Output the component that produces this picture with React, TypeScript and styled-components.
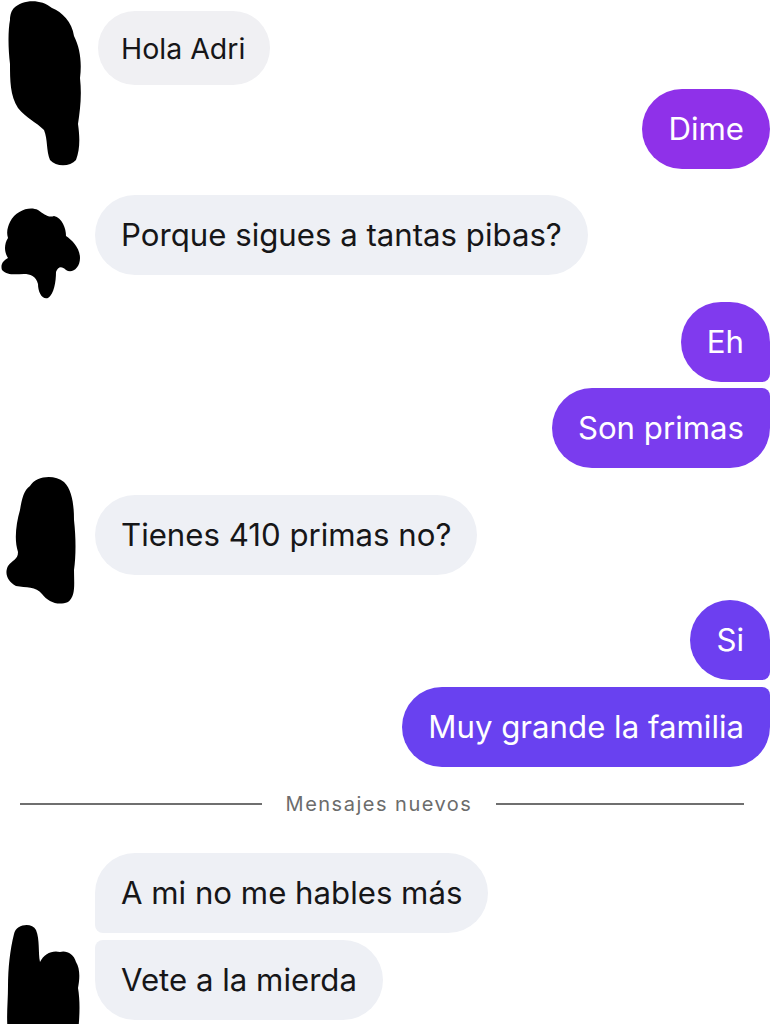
import React from "react";
import styled, { createGlobalStyle, css } from "styled-components";

const Global = createGlobalStyle`
  html, body { margin: 0; padding: 0; background: #ffffff; }
  body { font-family: Inter, "Noto Sans", "Liberation Sans", sans-serif; }
  * { box-sizing: border-box; }
`;

const Page = styled.div`
  position: relative;
  width: 771px;
  height: 1024px;
  overflow: hidden;
  background: #ffffff;
`;

const Thread = styled.div`
  display: flex;
  flex-direction: column;
  padding: 11px 1px 0 0;
`;

type Side = "in" | "out";

const Row = styled.div<{ $side: Side; $mt: number; $small?: boolean }>`
  display: flex;
  justify-content: ${(p) => (p.$side === "out" ? "flex-end" : "flex-start")};
  padding-left: ${(p) => (p.$side === "in" ? (p.$small ? "98px" : "95px") : "0")};
  margin-top: ${(p) => p.$mt}px;
`;

type Corners = { tl?: boolean; tr?: boolean; bl?: boolean; br?: boolean };

const Bubble = styled.div<{ $side: Side; $bg?: string; $small?: boolean; $c: Corners }>`
  display: flex;
  align-items: center;
  height: ${(p) => (p.$small ? 74 : 80)}px;
  padding: ${(p) => (p.$small ? "0 25px 0 23px" : "0 26px 1px")};
  font-size: ${(p) => (p.$small ? 28.5 : 31.2)}px;
  letter-spacing: 0;
  white-space: nowrap;
  border-top-left-radius: ${(p) => (p.$c.tl ? 8 : 40)}px;
  border-top-right-radius: ${(p) => (p.$c.tr ? 8 : 40)}px;
  border-bottom-left-radius: ${(p) => (p.$c.bl ? 8 : 40)}px;
  border-bottom-right-radius: ${(p) => (p.$c.br ? 8 : 40)}px;
  ${(p) =>
    p.$side === "in"
      ? css`
          background: ${p.$small ? "#f0f0f3" : "#eef0f5"};
          color: #161618;
        `
      : css`
          background: ${p.$bg};
          color: #ffffff;
        `}
`;

const Divider = styled.div`
  display: grid;
  grid-template-columns: 242px 1fr 248px;
  align-items: center;
  column-gap: 20px;
  padding: 0 26px 0 20px;
  margin-top: 26px;
  height: 22px;
`;

const Rule = styled.div`
  height: 2px;
  background: #6f6f6f;
`;

const DividerLabel = styled.span`
  font-family: Inter, "Noto Sans", sans-serif;
  font-size: 20px;
  color: #6c6c6c;
  text-align: center;
  letter-spacing: 1.5px;
  line-height: 22px;
`;

const Scribble = styled.svg<{ $x: number; $y: number }>`
  position: absolute;
  left: ${(p) => p.$x}px;
  top: ${(p) => p.$y}px;
  overflow: visible;
`;

type Msg = {
  text: string;
  side: Side;
  mt: number;
  c?: Corners;
  bg?: string;
  small?: boolean;
};

const before: Msg[] = [
  { text: "Hola Adri", side: "in", mt: 0, small: true },
  { text: "Dime", side: "out", mt: 4, bg: "#8f31e9" },
  { text: "Porque sigues a tantas pibas?", side: "in", mt: 26 },
  { text: "Eh", side: "out", mt: 27, bg: "#803aee", c: { br: true } },
  { text: "Son primas", side: "out", mt: 6, bg: "#7a3cee", c: { tr: true } },
  { text: "Tienes 410 primas no?", side: "in", mt: 27 },
  { text: "Si", side: "out", mt: 25, bg: "#6d3ff0", c: { br: true } },
  { text: "Muy grande la familia", side: "out", mt: 7, bg: "#6941f0", c: { tr: true } },
];

const after: Msg[] = [
  { text: "A mi no me hables más", side: "in", mt: 38, c: { bl: true } },
  { text: "Vete a la mierda", side: "in", mt: 7, c: { tl: true } },
];

const renderMsg = (m: Msg, i: number) => (
  <Row key={i} $side={m.side} $mt={m.mt} $small={m.small}>
    <Bubble $side={m.side} $bg={m.bg} $small={m.small} $c={m.c || {}}>
      {m.text}
    </Bubble>
  </Row>
);

export default function App() {
  return (
    <>
      <Global />
      <Page>
        <Thread>
          {before.map(renderMsg)}
          <Divider>
            <Rule />
            <DividerLabel>Mensajes nuevos</DividerLabel>
            <Rule />
          </Divider>
          {after.map(renderMsg)}
        </Thread>

        <Scribble $x={0} $y={0} width="90" height="170" viewBox="0 0 90 170">
          <path
            fill="#000"
            d="M14 8 C22 0 40 -2 52 8 C62 12 72 22 74 36 C80 48 82 62 80 78 C82 96 80 110 78 124 C80 138 80 150 76 160 C70 167 56 167 50 160 C46 150 48 140 44 130 C36 122 26 118 18 108 C10 96 10 80 10 64 C8 48 8 30 10 20 C10 14 12 10 14 8 Z"
          />
        </Scribble>

        <Scribble $x={0} $y={204} width="90" height="100" viewBox="0 0 90 100">
          <path
            fill="#000"
            d="M10 18 C16 6 30 2 38 6 C44 10 48 14 54 12 C62 14 66 24 66 32 C72 36 80 44 80 54 C80 64 72 70 66 66 C62 62 58 62 56 68 C56 78 54 90 48 94 C42 96 38 88 38 80 C36 72 30 70 24 70 C16 70 8 72 2 66 C0 60 4 56 8 54 C4 48 4 40 8 34 C6 28 8 22 10 18 Z"
          />
        </Scribble>

        <Scribble $x={0} $y={474} width="90" height="140" viewBox="0 0 90 140">
          <path
            fill="#000"
            d="M30 12 C36 2 54 0 64 8 C72 16 74 30 74 46 C76 64 76 82 74 96 C74 110 76 122 68 128 C58 132 48 128 42 120 C36 112 26 114 16 112 C8 108 4 100 8 92 C12 86 18 86 18 78 C14 66 16 50 20 36 C22 24 24 16 30 12 Z"
          />
        </Scribble>

        <Scribble $x={0} $y={922} width="90" height="110" viewBox="0 0 90 110">
          <path
            fill="#000"
            d="M14 12 C16 2 32 0 36 8 C40 18 38 30 40 40 C44 32 52 28 60 30 C66 28 74 32 76 40 C80 46 80 56 78 66 C80 78 80 92 78 110 L8 110 C6 96 8 80 8 64 C8 46 10 28 14 12 Z"
          />
        </Scribble>
      </Page>
    </>
  );
}
